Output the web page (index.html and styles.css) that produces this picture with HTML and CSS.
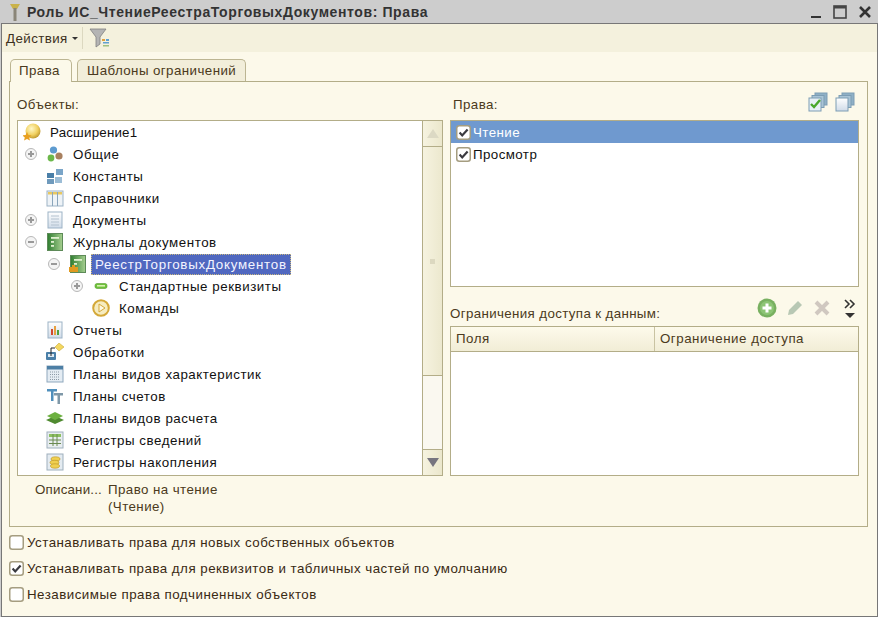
FILE: index.html
```html
<!DOCTYPE html>
<html lang="en">
<head>
  <meta charset="UTF-8">
  <link rel="stylesheet" href="styles.css">
  <title>Роль: Права</title>
</head>
<body>

<svg class="defs" width="0" height="0">
  <defs>
    <linearGradient id="book" x1="0" x2="1" y1="0" y2="0"><stop offset="0" stop-color="#2f7d30"/><stop offset="1" stop-color="#a6cf90"/></linearGradient>
    <linearGradient id="paper" x1="0" x2="0" y1="0" y2="1"><stop offset="0" stop-color="#fff"/><stop offset="1" stop-color="#cfdbe8"/></linearGradient>
    <radialGradient id="ball" cx="0.4" cy="0.35" r="0.7"><stop offset="0" stop-color="#fff8c8"/><stop offset="0.6" stop-color="#f0d060"/><stop offset="1" stop-color="#b8922a"/></radialGradient>
    <symbol id="check" viewBox="0 0 15 15">
      <rect x="0.75" y="0.75" width="13.5" height="13.5" rx="2.5" fill="#fff" stroke="#a59d80" stroke-width="1.5"/>
    </symbol>
    <symbol id="tick" viewBox="0 0 15 15">
      <path d="M3.6 7.6 L6.2 10.4 L11.6 4.4" fill="none" stroke="#3a3a40" stroke-width="2.2"/>
    </symbol>
    <symbol id="journal" viewBox="0 0 18 18">
      <rect x="1.5" y="0.5" width="15" height="17" fill="url(#book)" stroke="#5d8a58"/>
      <rect x="5" y="4" width="8" height="1.8" fill="#e0f0d0"/>
      <rect x="5" y="8" width="3" height="1.8" fill="#e0f0d0"/>
      <rect x="5" y="12" width="3" height="1.8" fill="#e0f0d0"/>
    </symbol>
  </defs>
</svg>

<div class="window">
  <div class="titlebar">
    <svg class="title-icon" width="12" height="20" viewBox="0 0 12 20">
      <path d="M1 2 H11 L8 7 H4 Z" fill="#c9b24a"/>
      <rect x="4.5" y="6" width="3" height="13" fill="#8a8578"/>
    </svg>
    <span class="title-text">Роль ИС_ЧтениеРеестраТорговыхДокументов: Права</span>
    <div class="win-btns">
      <svg width="12" height="14" viewBox="0 0 12 14"><rect x="1" y="11" width="10" height="2" fill="#333"/></svg>
      <svg width="14" height="14" viewBox="0 0 14 14"><rect x="1" y="1" width="12" height="12" fill="none" stroke="#444" stroke-width="1.6"/><rect x="1" y="1" width="12" height="2.5" fill="#444"/></svg>
      <svg width="14" height="14" viewBox="0 0 14 14"><path d="M2 2 L12 12 M12 2 L2 12" stroke="#333" stroke-width="2.6"/></svg>
    </div>
  </div>

  <div class="toolbar">
    <span class="actions">Действия</span>
    <span class="caret"></span>
    <span class="tool-sep"></span>
    <svg width="22" height="22" viewBox="0 0 22 22">
      <path d="M1 2 H17 L11 10 V17 L7 20 V10 Z" fill="#b4b4b4" stroke="#808080" stroke-width="0.8"/>
      <rect x="13" y="12" width="3" height="2" fill="#e0a040"/>
      <rect x="17" y="12" width="3" height="2" fill="#60a0d0"/>
      <rect x="14" y="15" width="6" height="1.5" fill="#60a0d0"/>
      <rect x="14" y="18" width="6" height="1.5" fill="#a0c080"/>
    </svg>
  </div>

  <div class="tabs">
    <div class="tab tab-active">Права</div>
    <div class="tab">Шаблоны ограничений</div>
  </div>

  <div class="panel">
    <div class="left-col">
      <div class="col-head">Объекты:</div>
      <div class="tree-box">
        <div class="tree">
          <div class="row root">
            <svg class="icon" width="18" height="18" viewBox="0 0 18 18"><circle cx="10" cy="8" r="7.5" fill="url(#ball)"/><path d="M4 9 L5.4 12 L8.6 12.4 L6.2 14.4 L7 17.6 L4 16 L1 17.6 L1.8 14.4 L-0.6 12.4 L2.6 12 Z" fill="#e8a020"/></svg>
            <span class="label root-label">Расширение1</span>
          </div>
          <div class="row lvl1">
            <span class="exp plus"></span>
            <svg class="icon" width="18" height="18" viewBox="0 0 18 18"><circle cx="7.5" cy="5" r="3.6" fill="#5d9bd0"/><circle cx="13" cy="11" r="3.6" fill="#a8805f"/><circle cx="5" cy="13" r="3.4" fill="#6cb84a"/></svg>
            <span class="label">Общие</span>
          </div>
          <div class="row lvl1">
            <span class="exp none"></span>
            <svg class="icon" width="18" height="18" viewBox="0 0 18 18"><rect x="1" y="6" width="7" height="5" fill="#4a7fa8"/><rect x="10" y="2" width="7" height="6" fill="#7aa5c8"/><rect x="1" y="12" width="7" height="5" fill="#6f9abc"/><rect x="9" y="10" width="7" height="6" fill="#9cbdd6"/></svg>
            <span class="label">Константы</span>
          </div>
          <div class="row lvl1">
            <span class="exp none"></span>
            <svg class="icon" width="18" height="18" viewBox="0 0 18 18"><rect x="1" y="2" width="16" height="15" fill="#eef3f7" stroke="#9db3c6"/><rect x="2" y="3" width="14" height="2.5" fill="#e8c860"/><path d="M6.5 3 V17 M11.5 3 V17" stroke="#8aa5bb"/></svg>
            <span class="label">Справочники</span>
          </div>
          <div class="row lvl1">
            <span class="exp plus"></span>
            <svg class="icon" width="18" height="18" viewBox="0 0 18 18"><rect x="2" y="1" width="14" height="16" fill="url(#paper)" stroke="#9db3c6"/><path d="M5 5 H13 M5 8 H13 M5 11 H13 M5 14 H13" stroke="#b4c2cf"/></svg>
            <span class="label">Документы</span>
          </div>
          <div class="row lvl1">
            <span class="exp minus"></span>
            <svg class="icon" width="18" height="18"><use href="#journal"/></svg>
            <span class="label">Журналы документов</span>
          </div>
          <div class="row lvl2">
            <span class="exp minus"></span>
            <svg class="icon" width="18" height="18" viewBox="0 0 18 18"><use href="#journal" width="18" height="18"/><path d="M0 12 H3 V10 H6 V12 H9 V17 H0 Z" fill="#e09a20"/></svg>
            <span class="label selected">РеестрТорговыхДокументов</span>
          </div>
          <div class="row lvl3">
            <span class="exp plus"></span>
            <svg class="icon" width="18" height="18" viewBox="0 0 18 18"><rect x="3" y="6.5" width="12" height="5" rx="2" fill="#6cc23a" stroke="#5a9a30" stroke-width="0.6"/><rect x="5" y="8" width="8" height="1.6" fill="#d8f0b0"/></svg>
            <span class="label">Стандартные реквизиты</span>
          </div>
          <div class="row lvl3">
            <span class="exp none"></span>
            <svg class="icon" width="18" height="18" viewBox="0 0 18 18"><circle cx="9" cy="9" r="7.8" fill="#f6ecc0" stroke="#d4a838" stroke-width="2"/><path d="M7 5 L13 9 L7 13 Z" fill="#fdf8e4" stroke="#d4a838"/></svg>
            <span class="label">Команды</span>
          </div>
          <div class="row lvl1">
            <span class="exp none"></span>
            <svg class="icon" width="18" height="18" viewBox="0 0 18 18"><rect x="2" y="1" width="14" height="16" fill="url(#paper)" stroke="#9db3c6"/><rect x="5" y="8" width="2" height="6" fill="#d04a30"/><rect x="8" y="5" width="2" height="9" fill="#e8a040"/><rect x="11" y="9" width="2" height="5" fill="#50a040"/></svg>
            <span class="label">Отчеты</span>
          </div>
          <div class="row lvl1">
            <span class="exp none"></span>
            <svg class="icon" width="18" height="18" viewBox="0 0 18 18"><path d="M13 0 L18 4 L13 8 L9 4 Z" fill="#f4d860" stroke="#c8a838" stroke-width="0.6"/><rect x="0" y="9" width="10" height="8" rx="1" fill="#4a7fa8"/><rect x="2" y="11" width="6" height="3" fill="#dbe8f2"/><path d="M5 5 H9 M5 5 V13" stroke="#222"/></svg>
            <span class="label">Обработки</span>
          </div>
          <div class="row lvl1">
            <span class="exp none"></span>
            <svg class="icon" width="18" height="18" viewBox="0 0 18 18"><rect x="1" y="1" width="16" height="16" fill="#e4ecf3" stroke="#8fa8bd"/><rect x="1" y="1" width="16" height="3.5" fill="#4d7fa5"/><path d="M4 7 H14 M4 9.5 H14 M4 12 H14 M4 14.5 H14" stroke="#8c9aa6" stroke-dasharray="1 1"/></svg>
            <span class="label">Планы видов характеристик</span>
          </div>
          <div class="row lvl1">
            <span class="exp none"></span>
            <svg class="icon" width="18" height="18" viewBox="0 0 18 18"><path d="M1 2 H11 V4.5 H7.5 V14 H5 V4.5 H1 Z" fill="#4f8fbc"/><path d="M8 6 H17 V8.5 H14 V17 H11.5 V8.5 H8 Z" fill="#7f98a8"/></svg>
            <span class="label">Планы счетов</span>
          </div>
          <div class="row lvl1">
            <span class="exp none"></span>
            <svg class="icon" width="18" height="18" viewBox="0 0 18 18"><path d="M0 11 L9 7 L18 11 L9 15 Z" fill="#4f8a30"/><path d="M1 7 L9 3 L17 7 L9 11 Z" fill="#6cb040"/></svg>
            <span class="label">Планы видов расчета</span>
          </div>
          <div class="row lvl1">
            <span class="exp none"></span>
            <svg class="icon" width="18" height="18" viewBox="0 0 18 18"><rect x="1" y="1" width="16" height="16" fill="#e8edf0" stroke="#9fb0bd"/><rect x="3" y="3" width="12" height="3" fill="#8cc060"/><path d="M3 9 H15 M3 12.5 H15 M7 3 V15 M11 3 V15" stroke="#6a8a50"/></svg>
            <span class="label">Регистры сведений</span>
          </div>
          <div class="row lvl1">
            <span class="exp none"></span>
            <svg class="icon" width="18" height="18" viewBox="0 0 18 18"><rect x="1" y="1" width="16" height="16" fill="#e4ebf1" stroke="#9fb0bd"/><ellipse cx="9.5" cy="6" rx="4.5" ry="2.2" fill="#efcf50" stroke="#b89020" stroke-width="0.6"/><ellipse cx="8.5" cy="9.5" rx="4.5" ry="2.2" fill="#efcf50" stroke="#b89020" stroke-width="0.6"/><ellipse cx="9" cy="13" rx="4.5" ry="2.2" fill="#efcf50" stroke="#b89020" stroke-width="0.6"/></svg>
            <span class="label">Регистры накопления</span>
          </div>
        </div>
        <div class="scrollbar">
          <div class="sb-btn"><span class="arrow-up"></span></div>
          <div class="sb-thumb"><span class="grip"></span></div>
          <div class="sb-track"></div>
          <div class="sb-btn"><span class="arrow-down"></span></div>
        </div>
      </div>
      <div class="descr">
        <span class="descr-name">Описани...</span>
        <span>Право на чтение<br>(Чтение)</span>
      </div>
    </div>

    <div class="right-col">
      <div class="col-head rights-head">
        <span>Права:</span>
        <div class="head-icons">
          <svg width="20" height="20" viewBox="0 0 20 20"><rect x="7" y="1" width="12" height="12" fill="#8fb0c6" stroke="#7c9db4"/><rect x="4" y="3.5" width="12" height="12" fill="#a9c4d6" stroke="#7c9db4"/><rect x="1" y="6" width="12" height="13" fill="#e8f0f6" stroke="#7c9db4"/><path d="M3 12 L6 15 L12 8" fill="none" stroke="#4aa82c" stroke-width="2.4"/></svg>
          <svg width="20" height="20" viewBox="0 0 20 20"><rect x="7" y="1" width="12" height="12" fill="#8fb0c6" stroke="#7c9db4"/><rect x="4" y="3.5" width="12" height="12" fill="#a9c4d6" stroke="#7c9db4"/><rect x="1" y="6" width="12" height="13" fill="url(#paper)" stroke="#7c9db4"/></svg>
        </div>
      </div>
      <div class="rights-list">
        <div class="right-row right-selected">
          <svg class="box" width="15" height="15"><use href="#check"/><use href="#tick"/></svg>
          <span>Чтение</span>
        </div>
        <div class="right-row">
          <svg class="box" width="15" height="15"><use href="#check"/><use href="#tick"/></svg>
          <span>Просмотр</span>
        </div>
      </div>
      <div class="limits-head">
        <span>Ограничения доступа к данным:</span>
        <div class="limit-icons">
          <svg width="20" height="20" viewBox="0 0 20 20"><circle cx="10" cy="10" r="9.5" fill="#78b060"/><circle cx="10" cy="10" r="7" fill="#8cc474"/><path d="M10 5.5 V14.5 M5.5 10 H14.5" stroke="#fff" stroke-width="3"/></svg>
          <svg width="18" height="18" viewBox="0 0 18 18"><path d="M12 2 L16 6 L7 15 L2 16 L3 11 Z" fill="#b8c8b4"/></svg>
          <svg width="18" height="18" viewBox="0 0 18 18"><path d="M3 3 L15 15 M15 3 L3 15" stroke="#d0c8c0" stroke-width="4"/></svg>
          <span class="more">
            <svg width="14" height="10" viewBox="0 0 14 10"><path d="M2 1 L6 5 L2 9 M7 1 L11 5 L7 9" fill="none" stroke="#333" stroke-width="1.6"/></svg>
            <span class="more-down"></span>
          </span>
        </div>
      </div>
      <div class="limits-table">
        <div class="table-head">
          <div class="th th-fields">Поля</div>
          <div class="th">Ограничение доступа</div>
        </div>
      </div>
    </div>
  </div>

  <div class="options">
    <label class="option"><svg class="box" width="15" height="15"><use href="#check"/></svg>Устанавливать права для новых собственных объектов</label>
    <label class="option"><svg class="box" width="15" height="15"><use href="#check"/><use href="#tick"/></svg>Устанавливать права для реквизитов и табличных частей по умолчанию</label>
    <label class="option"><svg class="box" width="15" height="15"><use href="#check"/></svg>Независимые права подчиненных объектов</label>
  </div>
</div>

</body>
</html>
```

FILE: styles.css
```css
* {
  box-sizing: border-box;
}

body {
  margin: 0;
  width: 878px;
  height: 617px;
  overflow: hidden;
  background-color: #cdcdcd;
  font-family: "Liberation Sans", Arial, sans-serif;
  font-size: 13.33px;
  letter-spacing: 0.42px;
  color: #111;
}

.defs {
  position: absolute;
}

.window {
  height: 616px;
}

.titlebar {
  height: 23px;
  display: flex;
  align-items: center;
  padding: 0 5px 0 9px;
  background-color: #cdcdcd;
}

.title-icon {
  margin-right: 6px;
}

.title-text {
  font-size: 14px;
  font-weight: bold;
  letter-spacing: 0.6px;
  color: #333;
}

.win-btns {
  margin-left: auto;
  display: flex;
  align-items: center;
  gap: 11px;
  padding-right: 1px;
}

.toolbar {
  height: 29px;
  margin-left: 1px;
  border: 1px solid #777;
  border-width: 1px 1px 0 1px;
  display: flex;
  align-items: center;
  padding-left: 4px;
  background-color: #f4f1dd;
  color: #3c3020;
}

.caret {
  margin: 1px 0 0 4px;
  border: 3px solid transparent;
  border-top-color: #333;
  border-bottom: 0;
}

.tool-sep {
  width: 1px;
  height: 22px;
  margin: 0 6px 0 4px;
  background-color: #dcd8c0;
}

.tabs {
  height: 29px;
  margin-left: 1px;
  padding: 7px 0 0 8px;
  display: flex;
  gap: 5px;
  align-items: flex-end;
  border: 1px solid #777;
  border-width: 0 1px;
  background-color: #fcf9ea;
  color: #4b3a20;
  letter-spacing: 0.42px;
}

.tab {
  height: 22px;
  padding: 0 9px;
  line-height: 21px;
  background-color: #f2eeda;
  border: 1px solid #bcb592;
  border-bottom: 0;
  border-radius: 5px 5px 0 0;
}

.tab-active {
  position: relative;
  z-index: 1;
  height: 23px;
  width: 62px;
  margin-bottom: -1px;
  padding-left: 8px;
  background-color: #fcf9ea;
}

.panel {
  height: 446px;
  margin: 0 0 0 1px;
  padding: 0 7px 0 7px;
  display: flex;
  gap: 7px;
  border: 0 solid #777;
  border-width: 0 1px;
  background-color: #fcf9ea;
  position: relative;
}

.panel::before {
  content: "";
  position: absolute;
  left: 7px;
  right: 9px;
  top: 0;
  bottom: 0;
  border: 1px solid #b3ad88;
  pointer-events: none;
}

.left-col,
.right-col {
  display: flex;
  flex-direction: column;
}

.left-col {
  width: 426px;
  margin-left: 8px;
}

.right-col {
  width: 409px;
}

.col-head {
  height: 39px;
  padding-top: 16px;
  color: #4b3a20;
}

.tree-box {
  height: 356px;
  display: flex;
  background-color: #fff;
  border: 1px solid #b3ad88;
}

.tree {
  flex: 1;
  letter-spacing: 0.54px;
}

.row {
  height: 22px;
  display: flex;
  align-items: center;
}

.root {
  padding-left: 5px;
}

.root .icon {
  margin-right: 9px;
}

.root-label {
  letter-spacing: 0.2px;
}

.lvl1 {
  padding-left: 7px;
}

.lvl2 {
  padding-left: 30px;
}

.lvl3 {
  padding-left: 53px;
}

.exp {
  width: 12px;
  height: 12px;
  margin-right: 9px;
  border-radius: 50%;
  position: relative;
  flex: none;
}

.plus,
.minus {
  border: 1px solid #b8b8b8;
  background-color: #f4f4f4;
}

.plus::before,
.minus::before {
  content: "";
  position: absolute;
  left: 2px;
  top: 4px;
  width: 6px;
  height: 2px;
  background-color: #999;
}

.plus::after {
  content: "";
  position: absolute;
  left: 4px;
  top: 2px;
  width: 2px;
  height: 6px;
  background-color: #999;
}

.row .icon {
  flex: none;
}

.exp + .icon {
  margin-right: 9px;
}

.selected {
  margin-left: -5px;
  padding: 3px 4px;
  height: 21px;
  line-height: 15px;
  letter-spacing: 0.74px;
  color: #f4f4ff;
  background-color: #5068c0;
  outline: 1px dotted #c9b880;
  outline-offset: -1px;
}

.scrollbar {
  width: 20px;
  display: flex;
  flex-direction: column;
  border-left: 1px solid #b3ad88;
}

.sb-btn {
  height: 25px;
  flex: none;
  display: flex;
  align-items: center;
  justify-content: center;
  background: linear-gradient(to right, #f6f3e0, #ebe7cc);
}

.arrow-up {
  border: 6px solid transparent;
  border-bottom: 9px solid #dcd9c4;
  border-top: 0;
}

.arrow-down {
  border: 6px solid transparent;
  border-top: 9px solid #77757f;
  border-bottom: 0;
}

.sb-thumb {
  height: 230px;
  flex: none;
  display: flex;
  align-items: center;
  justify-content: center;
  background: linear-gradient(to right, #f6f3e0, #ece8ce);
  border-top: 1px solid #b3ad88;
  border-bottom: 1px solid #b3ad88;
}

.grip {
  width: 5px;
  height: 5px;
  background-color: #dcd8c0;
}

.sb-track {
  flex: 1;
  background-color: #faf8f0;
  border-bottom: 1px solid #b3ad88;
}

.descr {
  display: flex;
  padding: 5px 0 0 18px;
  line-height: 17px;
  color: #4b3a20;
}

.descr-name {
  width: 73px;
  letter-spacing: 0.2px;
}

.rights-head {
  position: relative;
  display: flex;
  justify-content: space-between;
  padding-left: 3px;
}

.head-icons {
  display: flex;
  gap: 7px;
  margin: -5px 4px 0 0;
  height: 20px;
}

.rights-list {
  height: 167px;
  background-color: #fff;
  border: 1px solid #b3ad88;
}

.right-row {
  height: 22px;
  display: flex;
  align-items: center;
  gap: 2px;
  padding-left: 5px;
}

.right-selected {
  background-color: #6f99cf;
  color: #fff;
}

.limits-head {
  height: 39px;
  display: flex;
  align-items: flex-end;
  justify-content: space-between;
  padding-bottom: 5px;
  color: #4b3a20;
  letter-spacing: 0.36px;
}

.limit-icons {
  display: flex;
  align-items: center;
  gap: 9px;
  margin: 0 2px 3px 0;
}

.more {
  display: flex;
  flex-direction: column;
  align-items: center;
  gap: 4px;
  margin-left: 3px;
}

.more-down {
  border: 5px solid transparent;
  border-top: 5px solid #333;
  border-bottom: 0;
}

.limits-table {
  height: 150px;
  background-color: #fff;
  border: 1px solid #b3ad88;
}

.table-head {
  height: 25px;
  display: flex;
  background: linear-gradient(to bottom, #fdfaeb, #f1edd6);
  border-bottom: 1px solid #b3ad88;
  color: #4b3a20;
  letter-spacing: 0.5px;
}

.th {
  padding: 4px 5px;
}

.th-fields {
  width: 204px;
  border-right: 1px solid #c9c3a2;
}

.options {
  height: 90px;
  margin-left: 1px;
  padding: 2px 0 0 7px;
  border: 1px solid #777;
  border-top: 0;
  background-color: #fcf9ea;
  color: #3a2a14;
  letter-spacing: 0.48px;
}

.option {
  height: 26px;
  display: flex;
  align-items: center;
  gap: 3px;
}
```
